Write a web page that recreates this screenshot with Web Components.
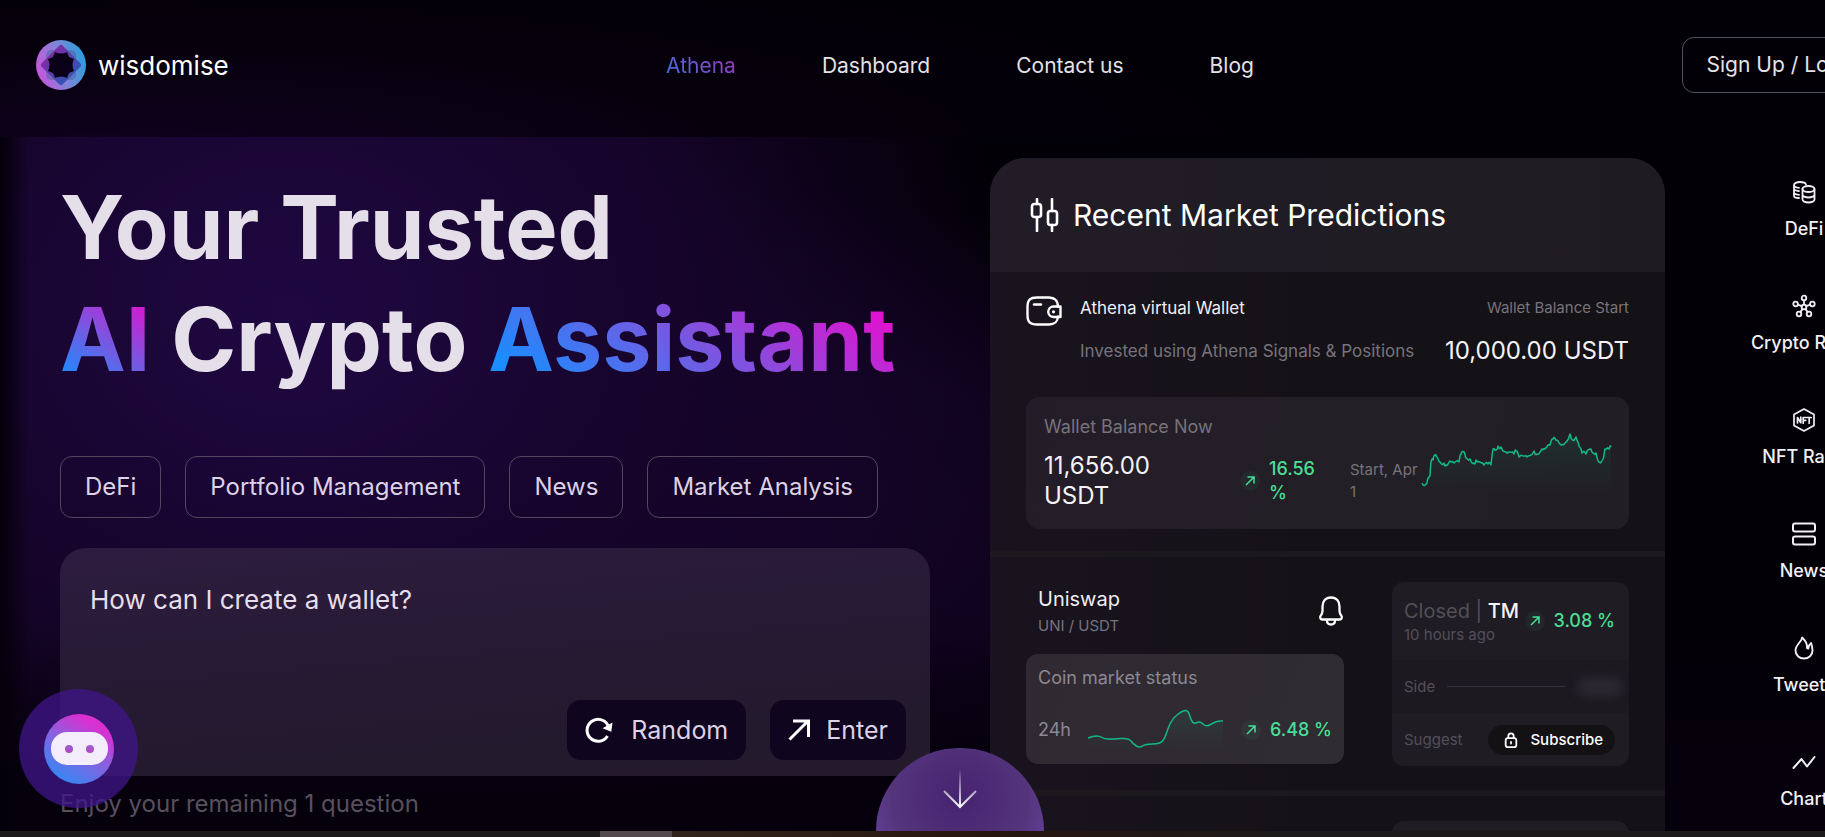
<!DOCTYPE html>
<html lang="en">
<head>
<meta charset="utf-8">
<meta name="viewport" content="width=device-width, initial-scale=1">
<title>Wisdomise</title>
<style>
  html, body {
    height: 100%;
    margin: 0;
  }
  body {
    overflow: hidden;
    background: #020006;
    color: #fff;
    font-family: Inter, "Open Sans", sans-serif;
    --muted: #77737c;
    --green: #4ade98;
    --brand: linear-gradient(35deg, #1a8dff 10%, #7a56e0 50%, #e012cf 90%);
  }
</style>
</head>
<body>
<wisdom-page>
  <wisdom-header slot="header"></wisdom-header>
  <wisdom-hero></wisdom-hero>
  <market-predictions></market-predictions>
  <side-menu>
    <side-item icon="coins">DeFi</side-item>
    <side-item icon="hub">Crypto Rank</side-item>
    <side-item icon="nft">NFT Rank</side-item>
    <side-item icon="rows">News</side-item>
    <side-item icon="flame">Tweets</side-item>
    <side-item icon="zigzag">Chart</side-item>
  </side-menu>
</wisdom-page>

<script>
const icons = {
  coins: ['0 0 24 24', '<g stroke-width="1.8"><path d="M2 5v11c0 1.200 2 2 5 2M2 5c0-1.800 2.500-3 6-3s5.500 1 6 2.500M2 5c0 1.500 2 2.500 5 2.800M2 8.800c0 1.300 2 2 5 2.400M2 12.500c0 1.200 2 2 5 2.300"/><ellipse cx="16.500" cy="9" rx="6" ry="3"/><path d="M10.500 9v10.500c0 1.600 2.600 3 6 3s6-1.400 6-3V9M10.500 14.500c0 1.600 2.600 3 6 3s6-1.400 6-3"/></g>'],
  hub: ['0 0 24 24', '<g stroke-width="1.800"><circle cx="12" cy="13" r="2.400"/><circle cx="12" cy="4" r="2.300"/><circle cx="3.600" cy="10" r="2.300"/><circle cx="20.400" cy="10" r="2.300"/><circle cx="7" cy="20" r="2.300"/><circle cx="17" cy="20" r="2.300"/><path d="M12 6.300v4.300M5.800 10.700l3.900 1.500M18.200 10.700l-3.900 1.500M8.300 18.100l2.300-3.200M15.700 18.100l-2.300-3.200"/></g>'],
  nft: ['0 0 24 24', '<path stroke-width="1.700" d="M12 1l10 5.500v11L12 23 2 17.500v-11z"/><g stroke-width="1.700"><path d="M5.500 15V9.500l3.300 5.200V9M11.200 15.200V9.500h3M11.200 12.300h2.500M15.200 9.500h4M17.200 9.500v5.700"/></g>'],
  rows: ['0 0 24 24', '<rect x="1" y="1.500" width="22" height="8" rx="2"/><rect x="1" y="14.500" width="22" height="8" rx="2"/>'],
  flame: ['0 0 24 24', '<path stroke-width="1.900" d="M10 1.500c.5 3.500-6.500 7-6.500 13 0 4.500 3.700 8 8.500 8s8.500-3.500 8.500-8c0-2.500-.6-5-1.400-7.500l-2 2.300-.8 3.200-1.300-.5C15.500 7.500 13 4 10 1.500z"/>'],
  zigzag: ['0 0 24 24', '<path d="M1.500 18l8-9 5.500 7.500L22.500 7"/>'],
  candles: ['0 0 30 34', '<g stroke-width="2.600"><path d="M8 1v5M8 19v14M23 1v12M23 27v6"/><rect x="3" y="6" width="9" height="13" rx="2.500"/><rect x="19" y="13" width="9" height="14" rx="2.500"/></g>'],
  wallet: ['0 0 36 30', '<g stroke-width="2.400"><path d="M32 10.500C31.500 4 29 2 23 1.500H11C4 1.500 1.500 4 1.500 11v8c0 7 2.500 9.500 9.500 9.500h12c6 0 8.500-2 9-8"/><path d="M34.500 10.500h-7a5.200 5.200 0 0 0 0 10.500h7z"/><path d="M8 8.500h7"/></g><circle cx="27.500" cy="15.800" r="1.600" fill="currentColor" stroke="none"/>'],
  bell: ['0 0 26 30', '<g stroke-width="2.300"><path d="M13 1.500c-5.500 0-8.500 4-8.500 9v4.500c0 2-.8 3.300-1.900 4.900-1.400 2 .2 3.600 2.400 3.600h16c2.200 0 3.800-1.600 2.400-3.600-1.100-1.600-1.900-2.900-1.900-4.900v-4.500c0-5-3-9-8.500-9z"/><path d="M9 24.500c0 2.500 1.700 4 4 4s4-1.500 4-4"/></g>'],
  refresh: ['0 0 28 26', '<path stroke-width="3" stroke-linecap="butt" d="M22.500 19A11 11 0 1 1 23 8.500"/><path fill="currentColor" stroke="none" d="M27.500 5.500l-1.200 9.300-8.800-3.600z"/>'],
  northeast: ['0 0 22 22', '<path stroke-width="3" stroke-linecap="butt" stroke-linejoin="miter" d="M1.500 20.500L20 2M5 2h15.500v16"/>'],
  lock: ['0 0 14 18', '<rect x="1" y="7" width="12" height="10" rx="2.500"/><path d="M4 7V4.500a3 3 0 0 1 6 0V7M7 11v2"/>'],
};

class WiIcon extends HTMLElement {
  connectedCallback() {
    const [box, body] = icons[this.getAttribute('name')];
    this.attachShadow({ mode: 'open' }).innerHTML = `
      <style>
        :host { display: block; flex: none; width: 24px; height: 24px; }
        svg { display: block; width: 100%; height: 100%; }
      </style>
      <svg viewBox="${box}" fill="none" stroke="currentColor" stroke-width="2"
        stroke-linecap="round" stroke-linejoin="round" aria-hidden="true">${body}</svg>`;
  }
}
customElements.define('wi-icon', WiIcon);

// "up" badge with the percentage beside it
class PriceChange extends HTMLElement {
  connectedCallback() {
    this.attachShadow({ mode: 'open' }).innerHTML = `
      <style>
        :host {
          display: flex;
          align-items: center;
          gap: 9px;
          color: var(--green);
          font-size: 18px;
          font-weight: 500;
          line-height: 24px;
        }
        i {
          display: grid;
          place-items: center;
          flex: none;
          width: 20px;
          height: 20px;
          border-radius: 50%;
          background: #4ade980f;
        }
        svg { width: 10px; height: 10px; }
      </style>
      <i><svg viewBox="0 0 10 10" fill="none" stroke="currentColor" stroke-width="1.500"><path d="M1 9l8-8M2.500 1H9v6.500"/></svg></i>
      <span><slot></slot></span>`;
  }
}
customElements.define('price-change', PriceChange);

class SparkLine extends HTMLElement {
  connectedCallback() {
    const pts = this.getAttribute('points').trim().split(/\s+/).map(p => p.split(',').map(Number));
    const w = pts[pts.length - 1][0];
    const h = Number(this.getAttribute('height'));
    const line = this.hasAttribute('rough') ? this.rough(pts) : this.smooth(pts);
    this.attachShadow({ mode: 'open' }).innerHTML = `
      <style>
        :host { display: block; flex: none; }
        svg { display: block; overflow: visible; }
      </style>
      <svg width="${w}" height="${h}" viewBox="0 0 ${w} ${h}" aria-hidden="true">
        <defs>
          <linearGradient id="fade" x2="0" y2="1">
            <stop stop-color="#14c48a" stop-opacity=".1"/>
            <stop offset="1" stop-color="#14c48a" stop-opacity="0"/>
          </linearGradient>
        </defs>
        <path d="${line}V${h}H0z" fill="url(#fade)"/>
        <path d="${line}" fill="none" stroke="#12b886" stroke-width="1.500" stroke-linejoin="round"/>
      </svg>`;
  }
  rough(pts) {
    let d = `M${pts[0]}`;
    for (let i = 1; i < pts.length; i++) {
      const [ax, ay] = pts[i - 1], [bx, by] = pts[i];
      for (const t of [0.33, 0.66]) {
        const jitter = Math.sin(i * 7 + t * 40) * 2;
        d += `L${(ax + (bx - ax) * t).toFixed(1)},${(ay + (by - ay) * t + jitter).toFixed(1)}`;
      }
      d += `L${bx},${by}`;
    }
    return d;
  }
  smooth(pts) {
    let d = `M${pts[0]}`;
    for (let i = 1; i < pts.length - 1; i++) {
      const [x, y] = pts[i], [nx, ny] = pts[i + 1];
      d += `Q${x},${y} ${(x + nx) / 2},${(y + ny) / 2}`;
    }
    return d + `L${pts[pts.length - 1]}`;
  }
}
customElements.define('spark-line', SparkLine);

class WisdomHeader extends HTMLElement {
  connectedCallback() {
    this.attachShadow({ mode: 'open' }).innerHTML = `
      <style>
        :host {
          display: grid;
          grid-template-columns: 1fr auto 1fr;
          align-items: center;
          padding: 37px 38px 44px 36px;
          font-size: 21px;
        }
        a { color: #e4e2e6; text-decoration: none; white-space: nowrap; }
        .logo {
          display: flex;
          align-items: center;
          gap: 12px;
          color: #fff;
          font-size: 26px;
        }
        .logo svg { width: 50px; height: 50px; }
        nav { display: flex; gap: 86px; }
        nav a.active {
          background: linear-gradient(35deg, #3577dd, #8a44c8 70%, #a02bb5);
          background-clip: text;
          -webkit-background-clip: text;
          color: transparent;
        }
        .login {
          justify-self: end;
          padding: 0 24px;
          border: 1px solid #55515a;
          border-radius: 12px;
          line-height: 54px;
        }
      </style>
      <a class="logo" href="#">
        <svg viewBox="0 0 50 50" aria-hidden="true">
          <defs>
            <linearGradient id="ring" y1=".65" y2=".35">
              <stop stop-color="#cb54dd"/><stop offset=".5" stop-color="#8284d6"/><stop offset="1" stop-color="#279fdc"/>
            </linearGradient>
            <linearGradient id="petal" x1="0" y1=".5" x2="1" y2=".5">
              <stop stop-color="#7d2ca5"/><stop offset="1" stop-color="#3454b4"/>
            </linearGradient>
          </defs>
          <circle cx="25" cy="25" r="25" fill="url(#ring)"/>
          <rect x="10" y="10" width="30" height="30" rx="5" fill="#4a5f9e" fill-opacity=".5"/>
          <rect x="10" y="10" width="30" height="30" rx="3" fill="url(#petal)" transform="rotate(45 25 25)"/>
          <path fill="#0a0118" d="M19 12q6 3 12 0l2 5 5 2q-3 6 0 12l-5 2-2 5q-6-3-12 0l-2-5-5-2q3-6 0-12l5-2z"/>
        </svg>
        <span>wisdomise</span>
      </a>
      <nav>
        <a class="active" href="#">Athena</a>
        <a href="#">Dashboard</a>
        <a href="#">Contact us</a>
        <a href="#">Blog</a>
      </nav>
      <a class="login" href="#">Sign Up / Login</a>`;
  }
}
customElements.define('wisdom-header', WisdomHeader);

class WisdomHero extends HTMLElement {
  connectedCallback() {
    this.attachShadow({ mode: 'open' }).innerHTML = `
      <style>
        :host { display: block; padding-top: 34px; }
        h1 {
          margin: 0 0 61px;
          color: #e4dfe8;
          font-size: 88px;
          font-weight: 700;
          line-height: 112px;
          white-space: nowrap;
        }
        h1 em {
          background: var(--brand);
          background-clip: text;
          -webkit-background-clip: text;
          color: transparent;
          font-style: normal;
        }
        button {
          border: 0;
          color: #dcd2e6;
          font: inherit;
          font-size: 24px;
          white-space: nowrap;
        }
        .tags { display: flex; gap: 24px; }
        .tags button {
          padding: 0 24px;
          border: 1px solid #54465f;
          border-radius: 12px;
          background: none;
          line-height: 60px;
        }
        form {
          display: flex;
          flex-direction: column;
          margin-top: 30px;
          padding: 34px 24px 16px 30px;
          border-radius: 26px 26px 0 0;
          background: linear-gradient(175deg, #2e1c40, #251a32 50%, #231a2b);
        }
        textarea {
          height: 118px;
          padding: 0;
          border: 0;
          outline: 0;
          resize: none;
          background: none;
          color: #e6deec;
          font: inherit;
          font-size: 26px;
          line-height: 36px;
        }
        .actions { display: flex; justify-content: flex-end; gap: 24px; }
        .actions button {
          display: flex;
          align-items: center;
          gap: 18px;
          height: 60px;
          padding: 0 18px;
          border-radius: 14px;
          background: #10051f;
          font-size: 25px;
        }
        .actions wi-icon { width: 28px; height: 26px; color: #fff; }
        .actions .enter { gap: 16px; }
        .enter wi-icon { width: 22px; height: 22px; }
        p {
          margin: 12px 0 0;
          color: #57505d;
          font-size: 24px;
          line-height: 32px;
        }
      </style>
      <h1>Your Trusted<br><em>AI</em> Crypto <em>Assistant</em></h1>
      <div class="tags">
        <button>DeFi</button>
        <button>Portfolio Management</button>
        <button>News</button>
        <button>Market Analysis</button>
      </div>
      <form>
        <textarea aria-label="Question">How can I create a wallet?</textarea>
        <div class="actions">
          <button type="button"><wi-icon name="refresh"></wi-icon>Random</button>
          <button type="button" class="enter"><wi-icon name="northeast"></wi-icon>Enter</button>
        </div>
      </form>
      <p>Enjoy your remaining 1 question</p>`;
  }
}
customElements.define('wisdom-hero', WisdomHero);

class VirtualWallet extends HTMLElement {
  connectedCallback() {
    this.attachShadow({ mode: 'open' }).innerHTML = `
      <style>
        :host { display: block; padding: 24px 36px 22px; line-height: 24px; color: var(--muted); }
        wi-icon { width: 36px; height: 30px; color: #fff; }
        .top { display: flex; gap: 18px; }
        .rows { flex: 1; min-width: 0; display: grid; gap: 16px; }
        .rows > div {
          display: flex;
          justify-content: space-between;
          align-items: center;
          white-space: nowrap;
        }
        .name { color: #f0eef2; font-size: 17px; }
        .small { font-size: 15px; }
        .note { font-size: 17px; }
        .amount { color: #f4f2f6; font-size: 24px; line-height: 30px; }
        .now {
          display: flex;
          align-items: center;
          margin-top: 31px;
          padding: 18px;
          border-radius: 14px;
          background: linear-gradient(100deg, #241d29, #221f25 60%, #211f23);
        }
        .balance { flex: 1; font-size: 18px; }
        .balance > div { display: flex; align-items: center; margin-top: 12px; }
        .balance .amount { flex: 1; max-width: 160px; margin-right: 36px; }
        .usdt { display: block; }
        price-change { width: 76px; }
        .start { align-self: flex-end; width: 72px; margin: 0 0 8px 34px; font-size: 15px; line-height: 22px; }
      </style>
      <div class="top">
        <wi-icon name="wallet"></wi-icon>
        <div class="rows">
          <div><span class="name">Athena virtual Wallet</span><span class="small">Wallet Balance Start</span></div>
          <div><span class="note">Invested using Athena Signals &amp; Positions</span><span class="amount">10,000.00 USDT</span></div>
        </div>
      </div>
      <div class="now">
        <div class="balance">
          Wallet Balance Now
          <div>
            <span class="amount">11,656.00 <span class="usdt">USDT</span></span>
            <price-change>16.56 %</price-change>
          </div>
        </div>
        <div class="start">Start, Apr 1</div>
        <spark-line rough height="58" points="0,49 4,50 6,44 8,42 9,28 11,26 13,21 15,23 18,28 22,29 24,31 28,27 32,29 37,28 39,20 42,18 44,24 48,25 52,29 54,26 58,28 62,31 66,30 69,31 71,15 74,16 76,12 79,13 84,18 88,18 92,20 94,17 97,23 103,22 106,22 112,17 115,20 120,15 123,15 128,11 131,5 134,6 139,11 143,9 148,0 151,6 154,3 157,12 160,19 164,20 168,15 171,19 174,19 177,28 181,25 183,15 187,15 189,13"></spark-line>
      </div>`;
  }
}
customElements.define('virtual-wallet', VirtualWallet);

class CoinPrediction extends HTMLElement {
  connectedCallback() {
    this.attachShadow({ mode: 'open' }).innerHTML = `
      <style>
        :host {
          display: grid;
          grid-template-columns: 318fr 237fr;
          gap: 48px;
          padding: 25px 36px 24px;
          color: var(--muted);
          font-size: 15px;
          line-height: 20px;
          white-space: nowrap;
        }
        .head {
          display: flex;
          justify-content: space-between;
          align-items: center;
          padding: 4px 0 18px 12px;
        }
        h3 { min-height: 26px; margin: 0 0 4px; color: #f0eef2; font-size: 20px; font-weight: 400; line-height: 26px; }
        .pair { min-height: 20px; }
        wi-icon { color: #fff; }
        .bell { width: 26px; height: 30px; }
        .status {
          padding: 12px 12px 14px;
          border-radius: 12px;
          background: linear-gradient(110deg, #302932, #2f2c32);
          color: #8d8891;
          font-size: 18px;
          line-height: 24px;
        }
        .day { display: flex; align-items: center; justify-content: space-between; margin-top: 20px; }
        .signal { border-radius: 12px; background: #1f1c23; color: #534f58; overflow: hidden; }
        .signal > div { display: flex; align-items: center; justify-content: space-between; padding: 0 14px 0 12px; height: 53px; }
        .signal > div.state { height: 78px; }
        .state b { display: block; font-size: 20px; font-weight: 400; line-height: 28px; }
        .state b span { color: #f4f2f6; font-weight: 500; }
        .signal > div.side { gap: 12px; padding-right: 6px; background: #1c1920; }
        .side hr { flex: 1; margin: 0; border: 0; border-top: 1px solid #36323b; }
        .side i { width: 46px; height: 20px; border-radius: 10px; background: #2b2730; filter: blur(5px); }
        button {
          display: flex;
          align-items: center;
          gap: 12px;
          height: 30px;
          padding: 0 12px 0 16px;
          border: 0;
          border-radius: 15px;
          background: #131114;
          color: #fff;
          font: inherit;
          font-weight: 500;
        }
        button wi-icon { width: 14px; height: 16px; }
      </style>
      <div>
        <div class="head">
          <div><h3><slot></slot></h3><div class="pair"><slot name="pair"></slot></div></div>
          <wi-icon class="bell" name="bell"></wi-icon>
        </div>
        <div class="status">
          Coin market status
          <div class="day">
            24h
            <spark-line height="40" points="0,28 5,26 12,26 16,29 25,29 41,28 45,34 52,38 57,34 72,34 77,28 80,18 85,8 94,1 100,0 103,10 106,14 112,11 118,17 125,13 130,11 135,11"></spark-line>
            <price-change>6.48 %</price-change>
          </div>
        </div>
      </div>
      <div class="signal">
        <div class="state">
          <div><b>Closed | <span>TM</span></b>10 hours ago</div>
          <price-change>3.08 %</price-change>
        </div>
        <div class="side">Side<hr><i></i></div>
        <div>Suggest <button><wi-icon name="lock"></wi-icon>Subscribe</button></div>
      </div>`;
  }
}
customElements.define('coin-prediction', CoinPrediction);

class MarketPredictions extends HTMLElement {
  connectedCallback() {
    this.attachShadow({ mode: 'open' }).innerHTML = `
      <style>
        :host {
          display: block;
          margin-top: 21px;
          border-radius: 36px 36px 0 0;
          background: linear-gradient(90deg, #19131f, #151217 45%, #141216);
          overflow: hidden;
        }
        h2 {
          display: flex;
          align-items: center;
          gap: 14px;
          height: 114px;
          margin: 0;
          padding-left: 39px;
          background: linear-gradient(90deg, #211c27, #1f1c21);
          font-size: 30px;
          font-weight: 400;
        }
        h2 wi-icon { width: 30px; height: 34px; }
        hr { height: 6px; margin: 0; border: 0; background: #1b181e; }
      </style>
      <h2><wi-icon name="candles"></wi-icon>Recent Market Predictions</h2>
      <virtual-wallet></virtual-wallet>
      <hr>
      <coin-prediction>Uniswap<span slot="pair">UNI / USDT</span></coin-prediction>
      <hr>
      <coin-prediction></coin-prediction>`;
  }
}
customElements.define('market-predictions', MarketPredictions);

class SideMenu extends HTMLElement {
  connectedCallback() {
    this.attachShadow({ mode: 'open' }).innerHTML = `
      <style>
        :host { display: block; padding-top: 43px; }
        nav { display: flex; flex-direction: column; gap: 53px; }
      </style>
      <nav><slot></slot></nav>`;
  }
}
customElements.define('side-menu', SideMenu);

class SideItem extends HTMLElement {
  connectedCallback() {
    this.attachShadow({ mode: 'open' }).innerHTML = `
      <style>
        :host { display: block; }
        a {
          display: flex;
          flex-direction: column;
          align-items: center;
          gap: 13px;
          color: #f2f0f4;
          font-size: 18px;
          font-weight: 500;
          line-height: 24px;
          text-decoration: none;
        }
      </style>
      <a href="#"><wi-icon name="${this.getAttribute('icon')}"></wi-icon><slot></slot></a>`;
  }
}
customElements.define('side-item', SideItem);

class WisdomPage extends HTMLElement {
  connectedCallback() {
    this.attachShadow({ mode: 'open' }).innerHTML = `
      <style>
        :host { display: flex; flex-direction: column; position: relative; height: 100vh; overflow: hidden; }
        /* content runs past the right edge of the window */
        header, main { margin-right: -97px; }
        header { background: radial-gradient(60% 150% at 8% 110%, #10021f, #06000d 50%, #020006); }
        main {
          flex: 1;
          min-height: 0;
          overflow: hidden;
          display: grid;
          grid-template-columns: minmax(0, 870fr) 60px minmax(0, 675fr) 21px 236px;
          padding-left: 60px;
          background:
            linear-gradient(90deg, #04000b, #04000b00 30px),
            linear-gradient(0deg, #06000d 30px, #06000d00 220px),
            radial-gradient(38% 85% at 15% 25%, #1f0842, #16042a 55%, #16042a00),
            radial-gradient(50% 50% at 26% 55%, #16042a, #10031f 60%, #07001200),
            #020006;
        }
        ::slotted(market-predictions) { grid-column: 3; }
        ::slotted(side-menu) { grid-column: 5; }
        ::slotted(:not([slot])) { grid-row: 1; }
        footer { height: 6px; background: linear-gradient(90deg, #1c1a1b 600px, #544a4e 600px 672px, #30241a 672px, #26150f 1000px, #1c1a1b 1300px); }
        button { position: absolute; padding: 0; border: 0; }
        button svg { display: block; margin: auto; }
        .bot {
          left: 19px;
          bottom: 29px;
          width: 119px;
          height: 119px;
          border-radius: 50%;
          background: #40158ac0;
        }
        .down {
          left: calc(50% + 47px);
          bottom: 6px;
          width: 168px;
          height: 83px;
          margin-left: -84px;
          border-radius: 84px 84px 0 0;
          background: radial-gradient(circle at 50% 60%, #482571 10%, #54357c 70%, #66409e);
        }
      </style>
      <header><slot name="header"></slot></header>
      <main><slot></slot></main>
      <footer></footer>
      <button class="bot" aria-label="Chat">
        <svg width="72" height="70" viewBox="0 0 72 70">
          <defs>
            <linearGradient id="ball" x1=".2" y1="1" x2=".8" y2="0"><stop stop-color="#2b8cf5"/><stop offset=".5" stop-color="#8960df"/><stop offset=".85" stop-color="#d831d0"/></linearGradient>
            <linearGradient id="eye" x2="0" y2="1"><stop stop-color="#9a62d2"/><stop offset="1" stop-color="#b345c4"/></linearGradient>
          </defs>
          <circle cx="36" cy="35" r="35" fill="url(#ball)"/>
          <rect x="8" y="18" width="57" height="33" rx="16" fill="#f3edfb"/>
          <circle cx="26" cy="35" r="4" fill="url(#eye)"/><circle cx="47" cy="35" r="4" fill="url(#eye)"/>
        </svg>
      </button>
      <button class="down" aria-label="Scroll down">
        <svg width="34" height="38" viewBox="0 0 34 38" fill="none" stroke-width="2">
          <defs><linearGradient id="stem" gradientUnits="userSpaceOnUse" y1="0" x2="0" y2="37"><stop stop-color="#fff" stop-opacity=".1"/><stop offset="1" stop-color="#fff"/></linearGradient></defs>
          <path stroke="url(#stem)" d="M17 0v36M1 20l16 16 16-16"/>
        </svg>
      </button>`;
  }
}
customElements.define('wisdom-page', WisdomPage);
</script>
</body>
</html>
